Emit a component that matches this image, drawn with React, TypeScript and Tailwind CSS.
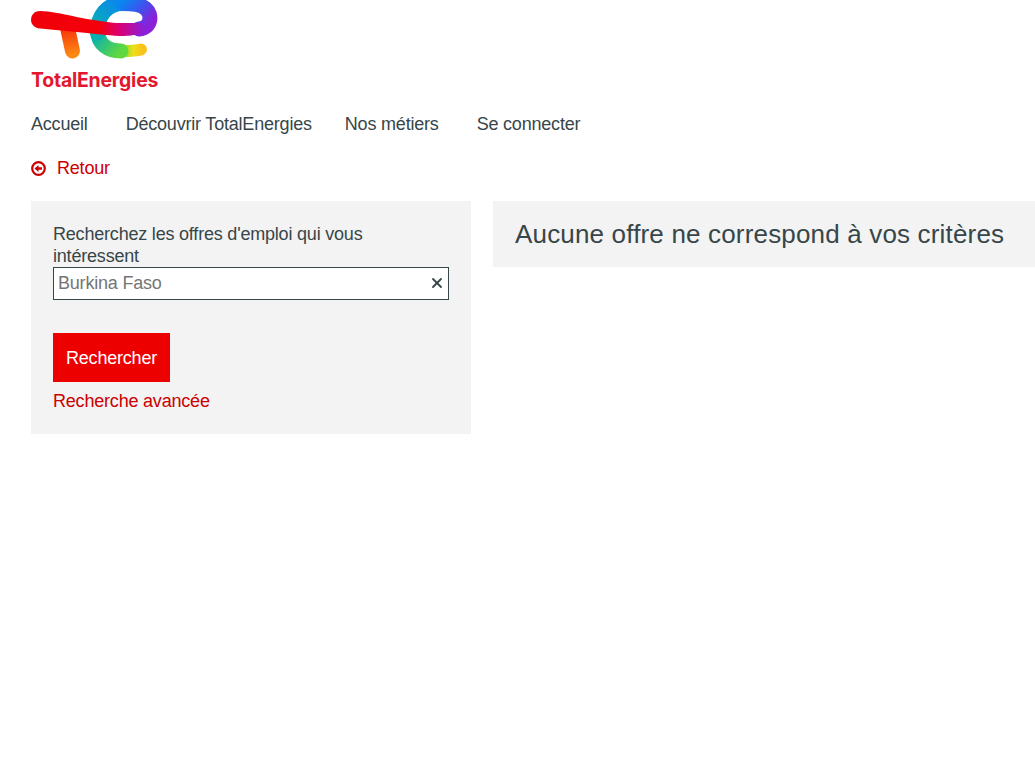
import React from 'react';
import { X } from 'lucide-react';

const Logo: React.FC = () => (
  <svg width="127" height="92" viewBox="0 0 127 92" className="block overflow-visible" fill="none" strokeLinecap="round">
    <defs>
      <linearGradient id="bar" gradientUnits="userSpaceOnUse" x1="0" y1="24" x2="118" y2="28">
        <stop offset="0" stopColor="#f0000a" />
        <stop offset="0.58" stopColor="#f5000a" />
        <stop offset="0.76" stopColor="#d8007a" />
        <stop offset="0.96" stopColor="#8a20d8" />
      </linearGradient>
      <linearGradient id="stem" gradientUnits="userSpaceOnUse" x1="37" y1="30" x2="42" y2="55">
        <stop offset="0" stopColor="#f83a0a" />
        <stop offset="1" stopColor="#fb8a14" />
      </linearGradient>
      <linearGradient id="lobe" gradientUnits="userSpaceOnUse" x1="116" y1="26" x2="90" y2="3">
        <stop offset="0" stopColor="#8a20d8" />
        <stop offset="0.5" stopColor="#3a55ee" />
        <stop offset="1" stopColor="#0a86f0" />
      </linearGradient>
      <linearGradient id="upper" gradientUnits="userSpaceOnUse" x1="92" y1="3" x2="66" y2="32">
        <stop offset="0" stopColor="#0a86f0" />
        <stop offset="1" stopColor="#08b0b0" />
      </linearGradient>
      <linearGradient id="lower" gradientUnits="userSpaceOnUse" x1="66" y1="32" x2="90" y2="51">
        <stop offset="0" stopColor="#08b0b0" />
        <stop offset="1" stopColor="#60d840" />
      </linearGradient>
      <linearGradient id="tail" gradientUnits="userSpaceOnUse" x1="88" y1="51" x2="112" y2="51">
        <stop offset="0" stopColor="#60d840" />
        <stop offset="0.6" stopColor="#ecdf18" />
        <stop offset="1" stopColor="#fbc01c" />
      </linearGradient>
    </defs>
    <path d="M90 51 C98 51 105 51 110 49.500" stroke="url(#tail)" strokeWidth="12" />
    <path d="M66.500 31 C67 44 77 51 90 51" stroke="url(#lower)" strokeWidth="15" />
    <path d="M92 3.500 C76 3.500 66 16 66.500 33" stroke="url(#upper)" strokeWidth="15" />
    <path d="M108 29 C121 28 121 14 115 9 C110 4 100 3.500 92 3.500" stroke="url(#lobe)" strokeWidth="15" />
    <path d="M37 30 L41.500 51" stroke="url(#stem)" strokeWidth="15" />
    <path
      d="M9 11 C30 12 42 17 56 19 C70 21 80 23 89 23 L111 23 L113 33 C100 36 95 36 89 36 C75 35 65 34 56 33 L9 28.500 C3 28 0 24 0 20 C0 15 3 11 9 11 Z"
      fill="url(#bar)"
    />
    <text x="0" y="87" fill="#e3172d" fontFamily="Inter, sans-serif" fontWeight="700" fontSize="19.400">
      TotalEnergies
    </text>
  </svg>
);

const BackIcon: React.FC = () => (
  <svg width="15" height="15" viewBox="0 0 15 15" className="mr-[11px]" aria-hidden="true">
    <circle cx="7.500" cy="7.500" r="6.300" fill="none" stroke="currentColor" strokeWidth="2.200" />
    <path d="M3.500 7.500 L7.500 4 V6.200 H11 V8.800 H7.500 V11 Z" fill="currentColor" />
  </svg>
);

const App: React.FC = () => {
  return (
    <div className="min-h-[782px] bg-white pl-[31px] font-['Liberation_Sans',Arial,sans-serif] text-[18px] leading-[22px] tracking-[-0.2px] text-[#374649]">
      <Logo />
      <nav className="mt-[21px] flex">
        <a href="#">Accueil</a>
        <a href="#" className="ml-[38px]">Découvrir TotalEnergies</a>
        <a href="#" className="ml-[33px]">Nos métiers</a>
        <a href="#" className="ml-[38px]">Se connecter</a>
      </nav>
      <a href="#" className="mt-[22px] flex items-center text-[#cc0000]">
        <BackIcon />
        Retour
      </a>
      <div className="mt-[22px] flex items-start gap-[22px]">
        <section className="w-[440px] shrink-0 bg-[#f3f3f3] p-[22px]">
          <label htmlFor="search" className="block">
            Recherchez les offres d'emploi qui vous intéressent
          </label>
          <div className="relative">
            <input
              id="search"
              readOnly
              value="Burkina Faso"
              className="block h-[33px] w-full border border-[#374649] bg-white pl-1 pr-6 text-[#757575] outline-none"
            />
            <X className="absolute top-[8px] right-[4px] h-[16px] w-[16px] text-[#374649]" strokeWidth={2.75} />
          </div>
          <button className="mt-[33px] block h-[49px] w-[117px] bg-[#ed0000] text-center text-white">
            Rechercher
          </button>
          <a href="#" className="mt-[8px] block text-[#cc0000]">Recherche avancée</a>
        </section>
        <section className="min-w-0 flex-1 bg-[#f3f3f3] px-[22px] py-[17px]">
          <h1 className="text-[26px] leading-[32px] font-normal tracking-[0.17px]">Aucune offre ne correspond à vos critères</h1>
        </section>
      </div>
    </div>
  );
};

export default App;
